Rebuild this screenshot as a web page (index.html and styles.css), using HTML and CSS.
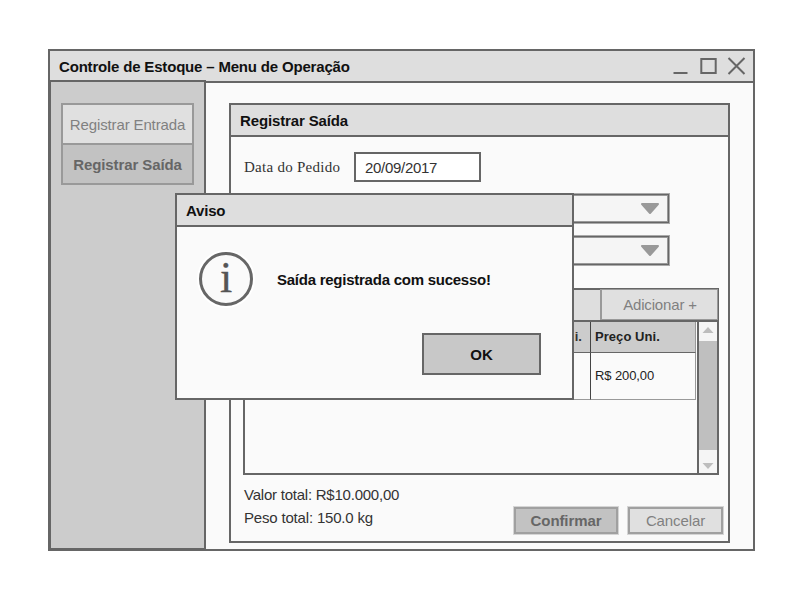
FILE: index.html
```html
<!DOCTYPE html>
<html lang="pt-BR">
<head>
<meta charset="utf-8">
<title>Controle de Estoque</title>
<link rel="stylesheet" href="styles.css">
</head>
<body>
<div class="window">
  <header class="titlebar">
    <h1 class="title"><span>Controle de Estoque – Menu de Operação</span></h1>
    <svg class="controls" width="76" height="20" viewBox="0 0 76 20" fill="none" stroke="#666" stroke-width="2">
      <path d="M1.5 17H15.5"/>
      <rect x="29.3" y="3" width="14.4" height="14"/>
      <path d="M56.5 2L72.5 18M72.5 2L56.5 18"/>
    </svg>
  </header>
  <div class="body">
    <nav class="sidebar">
      <button class="menu-item"><span>Registrar Entrada</span></button>
      <button class="menu-item active"><span>Registrar Saída</span></button>
    </nav>
    <main class="panel">
      <h2 class="panel-head"><span>Registrar Saída</span></h2>
      <div class="panel-body">
        <div class="field">
          <label class="label">Data do Pedido</label>
          <div class="input"><span>20/09/2017</span></div>
        </div>
        <div class="select"><svg width="20" height="12" viewBox="0 0 20 12"><path d="M2 1H18L10 10Z" fill="#999" stroke="#999" stroke-width="2" stroke-linejoin="round"/></svg></div>
        <div class="select"><svg width="20" height="12" viewBox="0 0 20 12"><path d="M2 1H18L10 10Z" fill="#999" stroke="#999" stroke-width="2" stroke-linejoin="round"/></svg></div>
        <section class="list">
          <div class="toolbar"><button class="add"><span>Adicionar +</span></button></div>
          <div class="list-body">
            <div class="grid">
              <div class="row head"><div class="cell qty">i.</div><div class="cell price"><span>Preço Uni.</span></div></div>
              <div class="row"><div class="cell qty"></div><div class="cell price"><span>R$ 200,00</span></div></div>
            </div>
            <div class="scrollbar">
              <div class="arrow"><svg width="12" height="6" viewBox="0 0 12 6"><path d="M0.5 6L6 0L11.5 6Z" fill="#bdbdbd"/></svg></div>
              <div class="thumb"></div>
              <div class="arrow down"><svg width="12" height="6" viewBox="0 0 12 6"><path d="M0.5 0L6 6L11.5 0Z" fill="#bdbdbd"/></svg></div>
            </div>
          </div>
        </section>
        <footer class="footer">
          <div class="totals"><p class="valor"><span>Valor total: R$10.000,00</span></p><p class="peso"><span>Peso total: 150.0 kg</span></p></div>
          <button class="btn primary"><span>Confirmar</span></button>
          <button class="btn cancel"><span>Cancelar</span></button>
        </footer>
      </div>
    </main>
  </div>
  <div class="dialog" role="dialog">
    <h2 class="dialog-head"><span>Aviso</span></h2>
    <div class="message">
      <div class="info"><span>i</span></div>
      <p class="text"><span>Saída registrada com sucesso!</span></p>
    </div>
    <button class="ok"><span>OK</span></button>
  </div>
</div>
</body>
</html>
```
FILE: styles.css
```css
* { box-sizing: border-box; margin: 0; padding: 0; }
body { background: #fff; font: 15px/20px "Liberation Sans", Arial, sans-serif; color: #333; }
button { font: inherit; color: inherit; }
h1, h2 { font-size: 15px; font-weight: bold; color: #111; letter-spacing: -0.14px; }
span { white-space: nowrap; }
.window { position: relative; width: 707px; height: 502px; margin: 49px 0 0 48px; border: 2px solid #666; background: #fafafa; }
.titlebar { height: 32px; display: flex; justify-content: space-between; align-items: center; padding: 0 5px 0 9px; border-bottom: 2px solid #666; background: #dedede; }
.title { padding-top: 2px; letter-spacing: -0.18px; }
.controls { margin-top: -1px; }
.body { display: flex; height: 466px; }
.sidebar { position: relative; width: 157px; height: 470px; margin: -3px 23px 0 -1px; padding: 21px 10px; border: 2px solid #666; background: #ccc; }
.menu-item { display: block; width: 133px; height: 42px; padding-top: 2px; border: 2px solid #999; background: #e0e0e0; color: #808080; text-align: center; letter-spacing: -0.13px; }
.menu-item.active { margin-top: -2px; background: #c2c2c2; color: #666; font-weight: bold; letter-spacing: -0.1px; }
.panel { width: 501px; height: 440px; margin-top: 20px; border: 2px solid #666; }
.panel-head { height: 32px; padding: 6px 0 0 9px; border-bottom: 2px solid #666; background: #dedede; }
.panel-body { padding: 15px 4px 0 12px; }
.field { display: flex; align-items: center; height: 30px; margin-bottom: 12px; }
.label { width: 111px; padding-left: 1px; font: 15px/20px "Liberation Serif", serif; letter-spacing: 0.27px; }
.input { width: 127px; height: 30px; padding: 4px 9px; border: 2px solid #666; background: #fff; letter-spacing: -0.3px; }
.select { display: flex; align-items: center; justify-content: flex-end; width: 315px; height: 29px; margin: 0 0 13px 111px; padding-right: 8px; border: 1px solid #666; background: #f5f5f5; box-shadow: 0 0 0 1px #aaa, inset 0 0 0 1px #999; }
.list { width: 476px; height: 187px; margin-top: 23px; border: 2px solid #666; }
.toolbar { display: flex; justify-content: flex-end; height: 32px; border-bottom: 2px solid #666; background: #dedede; }
.add { width: 118px; height: 31px; margin: -1px -1px 0 0; padding-left: 1px; border: 2px solid #999; border-width: 1px 1px 1px 2px; background: #e0e0e0; color: #808080; letter-spacing: -0.17px; }
.list-body { display: flex; height: 151px; }
.grid { width: 451px; margin-right: 1px; }
.row { display: grid; grid-template-columns: 346px 105px; height: 47px; font-size: 13px; }
.row.head { height: 31px; background: #ccc; font-weight: bold; }
.cell { display: flex; align-items: center; border-right: 1px solid #999; border-bottom: 1px solid #999; letter-spacing: -0.1px; }
.head .cell { border-bottom-color: #666; letter-spacing: 0.05px; }
.qty { justify-content: flex-end; padding-right: 8px; border-right-color: #444; }
.price { padding-left: 4px; color: #222; }
.head .cell { padding-bottom: 1px; }
.scrollbar { width: 20px; border-left: 2px solid #666; background: #f5f5f5; }
.arrow { display: flex; justify-content: center; align-items: flex-start; height: 19px; padding-top: 5px; }
.arrow.down { height: 22px; padding-top: 13px; }
.thumb { width: 18px; height: 109px; background: #bfbfbf; }
.footer { display: flex; align-items: flex-start; padding-top: 10px; }
.totals { width: 271px; padding-left: 1px; }
.totals p { height: 23px; }
.valor { letter-spacing: -0.23px; }
.peso { letter-spacing: -0.18px; }
.btn { height: 27px; margin-top: 22px; border: 2px solid #a0a0a0; box-shadow: 0 0 0 1px #d5d5d5; letter-spacing: -0.1px; }
.btn.primary { width: 104px; background: #c2c2c2; color: #666; font-weight: bold; }
.btn.cancel { width: 95px; margin-left: 10px; background: #e0e0e0; color: #808080; }
.dialog { position: absolute; left: 125px; top: 142px; width: 399px; height: 207px; border: 2px solid #666; background: #fafafa; color: #111; font-weight: bold; }
.dialog-head { height: 32px; padding: 6px 0 0 9px; border-bottom: 2px solid #666; background: #dedede; letter-spacing: -0.2px; }
.message { display: flex; align-items: center; height: 104px; padding-left: 22px; }
.info { width: 54px; height: 54px; border: 3px solid #666; border-radius: 50%; background: #fafafa; box-shadow: 0 0 0 2px #fff; color: #555; text-align: center; font: 44px/46px "Liberation Serif", serif; -webkit-text-stroke: 0.3px #555; }
.text { margin: 2px 0 0 24px; letter-spacing: -0.25px; }
.ok { display: block; width: 119px; height: 42px; margin: 2px 0 0 245px; padding-top: 1px; border: 2px solid #666; background: #c8c8c8; }
```
